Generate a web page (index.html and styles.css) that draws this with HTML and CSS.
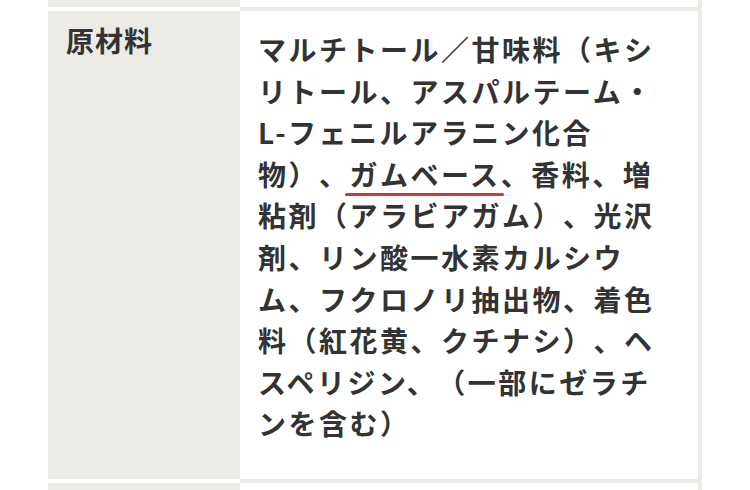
FILE: index.html
```html
<!DOCTYPE html>
<html lang="ja">
<head>
<meta charset="utf-8">
<link rel="stylesheet" href="styles.css">
</head>
<body>
<div class="page">
  <table class="spec">
    <tr class="row-cut">
      <th></th>
      <td></td>
    </tr>
    <tr>
      <th class="label">原材料</th>
      <td class="value">マルチトール／甘味料（キシリトール、アスパルテーム・L-フェニルアラニン化合物）、<span class="mark">ガムベース</span>、香料、増粘剤（アラビアガム）、光沢剤、リン酸一水素カルシウム、フクロノリ抽出物、着色料（紅花黄、クチナシ）、ヘスペリジン、（一部にゼラチンを含む）</td>
    </tr>
    <tr class="row-next">
      <th></th>
      <td></td>
    </tr>
  </table>
</div>
</body>
</html>
```

FILE: styles.css
```css
html, body {
  margin: 0;
  padding: 0;
  background: #ffffff;
}
.page {
  width: 750px;
  height: 490px;
  overflow: hidden;
  padding-left: 48px;
  box-sizing: border-box;
}
.spec {
  border-collapse: separate;
  border-spacing: 0;
  width: 654px;
  font-family: "Noto Sans CJK JP", "Noto Sans", sans-serif;
  font-weight: 700;
  color: #333333;
  text-spacing-trim: space-all;
  font-feature-settings: normal;
}
.spec th {
  width: 192px;
  box-sizing: border-box;
  background: #ecebe6;
  border-bottom: 4px solid #ffffff;
  text-align: left;
  vertical-align: top;
  padding: 0;
}
.spec td {
  background: #ffffff;
  border-bottom: 4px solid #ecebe6;
  border-right: 4px solid #ecebe6;
  vertical-align: top;
  padding: 0;
}
.row-cut th, .row-cut td {
  height: 7px;
}
.row-next th, .row-next td {
  height: 20px;
}
.label {
  font-size: 28px;
  line-height: 40px;
  letter-spacing: 1px;
  padding: 9px 18px 0 18px !important;
}
.value {
  font-size: 28px;
  line-height: 41.6px;
  letter-spacing: 2.5px;
  padding: 18px 18px 34px 18px !important;
}
.mark {
  position: relative;
}
.mark::after {
  content: "";
  position: absolute;
  left: -5px;
  right: -3px;
  bottom: -2px;
  height: 3px;
  border-radius: 2px;
  background: #cf3b2c;
}
```
